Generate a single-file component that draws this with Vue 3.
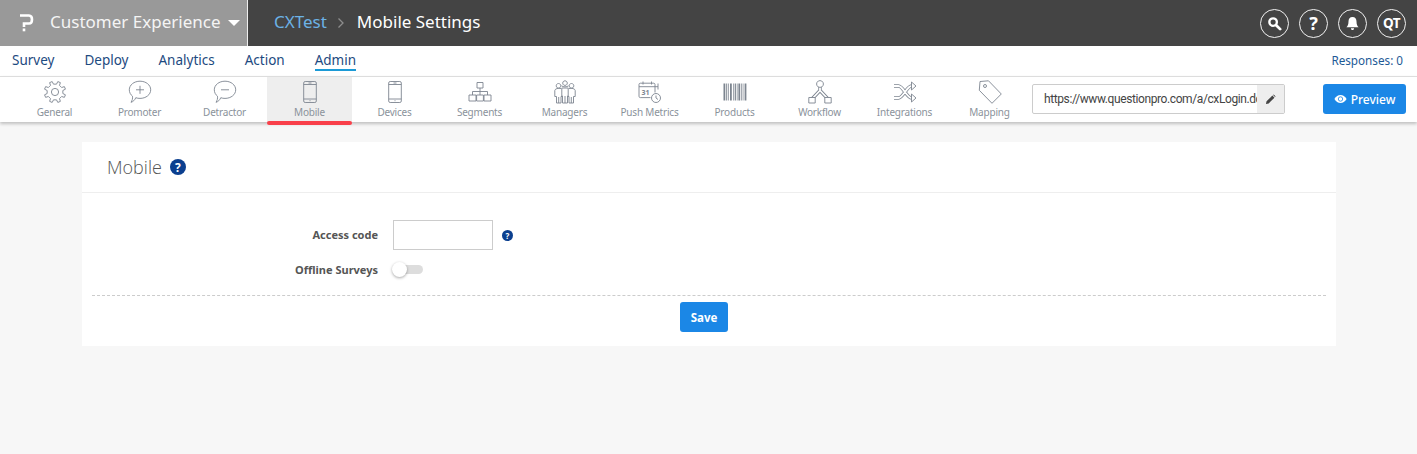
<script setup>
const gear = (() => {
  const cx = 12, cy = 12, pts = [], n = 8
  for (let i = 0; i < n; i++) {
    const a = (i / n) * Math.PI * 2 + Math.PI / 8
    const list = [[-0.2, 8], [-0.13, 10.8], [0.13, 10.8], [0.2, 8]]
    for (const [o, r] of list) {
      pts.push(`${(cx + r * Math.cos(a + o)).toFixed(2)} ${(cy + r * Math.sin(a + o)).toFixed(2)}`)
    }
  }
  return 'M' + pts.join('L') + 'Z M15.600 12a3.600 3.600 0 1 1-7.200 0a3.600 3.600 0 1 1 7.200 0Z'
})()

const bubble = 'M4.500 16.200C2.500 14.700 1.300 12.300 1.300 9.800C1.300 5 6 1.200 12 1.200S22.700 5 22.700 9.800S18 18.400 12 18.400C10.500 18.400 9.100 18.200 7.800 17.700C6.800 20 5 21.800 3 22.300C4.200 20.500 4.800 18.500 4.500 16.200Z'
const phone = 'M7.200 1.500H16.800A1.500 1.500 0 0 1 18.300 3V21A1.500 1.500 0 0 1 16.800 22.500H7.200A1.500 1.500 0 0 1 5.700 21V3A1.500 1.500 0 0 1 7.200 1.500ZM5.700 4.500H18.300M5.700 19H18.300M10.500 3H13.500M12 20.300V21.200'

const items = [
  { label: 'General', d: gear },
  { label: 'Promoter', d: bubble + 'M12 5.800V13.800M8 9.800H16' },
  { label: 'Detractor', d: bubble + 'M8 9.800H16' },
  { label: 'Mobile', d: phone, active: true },
  { label: 'Devices', d: phone },
  { label: 'Segments', d: 'M9 2.500H15V8H9ZM12 8V11.500M4.500 11.500H19.500M4.500 11.500V15M12 11.500V15M19.500 11.500V15M1 15H8V21H1ZM8.600 15H15.400V21H8.600ZM16 15H23V21H16Z' },
  { label: 'Managers', d: 'M12 .8a2.300 2.300 0 1 0 .01 0ZM5.500 3.500a2.300 2.300 0 1 0 .01 0ZM18.500 3.500a2.300 2.300 0 1 0 .01 0ZM8.500 5.800C10 7.200 14 7.200 15.500 5.800M8 8.500C5 8 2.200 8.500 1.800 10.500V16.500H3.500V23H8V16.500H9M16 8.500C19 8 21.800 8.500 22.200 10.500V16.500H20.500V23H16V16.500H15M8.800 8H15.200V16H14.500V23H9.500V16H8.800ZM12 16V23M5.700 17V23M18.300 17V23' },
  { label: 'Push Metrics', d: 'M17 12.500V4.500C17 3.700 16.500 3.200 15.700 3.200H2.300C1.500 3.200 1 3.700 1 4.500V16.300C1 17.100 1.500 17.600 2.300 17.600H12.500M1 6.700H20M5 1.500V4.500M13.500 1.500V4.500M22.500 18a4.500 4.500 0 1 1-9 0a4.500 4.500 0 1 1 9 0ZM18 15.500V18L20 19.500M20 3.500V9.500', extra: '31' },
  { label: 'Products', bars: true },
  { label: 'Workflow', band: 'M12 4V10.500L4 19M12 10.500L20 19', d: 'M12 .6a3.400 3.400 0 1 0 .01 0ZM.8 17.500H7.200V23H.8ZM16.800 17.500H23.200V23H16.800Z' },
  { label: 'Integrations', band: 'M1 6H5.500C10 6 14 18 18.500 18H20M1 18H5.500C10 18 14 6 18.500 6H20', d: 'M18.500 2L23 6L18.500 10ZM18.500 14L23 18L18.500 22Z' },
  { label: 'Mapping', d: 'M2 1.500L10.500 .8L23.300 14L14 23.300L1.300 10.300ZM8.500 6a1.500 1.500 0 1 1-3 0a1.500 1.500 0 1 1 3 0Z' }
]
const bars = [[.5, 1.8], [3.2, 1], [5.2, .7], [7, 1.8], [10, .7], [11.700, 1.200], [13.800, .7], [15.400, 1.800], [18, .7], [19.700, .7], [21.600, 1.800]]
</script>

<template>
  <div class="page">
    <header class="top">
      <div class="brand">
        <svg class="logo" viewBox="0 0 16 20" width="16" height="20"><path d="M2 2.500H11C13 2.500 14 4 14 6.500S13 10.500 11 10.500H6V14" fill="none" stroke="#fff" stroke-width="2.600"/><rect x="4.700" y="15.500" width="2.600" height="2.800" fill="#fff"/></svg>
        <span class="brand-name">Customer Experience</span>
        <span class="caret"></span>
      </div>
      <div class="crumbs">
        <span class="crumb-link">CXTest</span>
        <svg class="chev" viewBox="0 0 8 12" width="8" height="12"><path d="M1.500 1.500L6 6L1.500 10.500" fill="none" stroke="#8d8d8d" stroke-width="1.300"/></svg>
        <span class="crumb-page">Mobile Settings</span>
      </div>
      <div class="tools">
        <span class="tool"><svg viewBox="0 0 16 16" width="15" height="15"><circle cx="6.500" cy="6.500" r="4" fill="none" stroke="#fff" stroke-width="2.500"/><path d="M9.800 9.800L14 14" stroke="#fff" stroke-width="3" stroke-linecap="round"/></svg></span>
        <span class="tool tool-q">?</span>
        <span class="tool"><svg viewBox="0 0 16 16" width="15" height="15"><path d="M8 1C10.800 1 12.300 3 12.300 6C12.300 9 13 10.500 14.500 12H1.500C3 10.500 3.700 9 3.700 6C3.700 3 5.200 1 8 1ZM6.300 13H9.700C9.700 14 9 15 8 15S6.300 14 6.300 13Z" fill="#fff"/></svg></span>
        <span class="tool tool-t">QT</span>
      </div>
    </header>

    <nav class="menu">
      <a>Survey</a>
      <a>Deploy</a>
      <a>Analytics</a>
      <a>Action</a>
      <a class="current">Admin</a>
      <span class="responses">Responses: 0</span>
    </nav>

    <div class="iconbar">
      <div class="items">
        <div v-for="it in items" :key="it.label" class="item" :class="{ on: it.active }">
          <svg class="ico" viewBox="0 0 24 24" width="24" height="24">
            <template v-if="it.bars"><rect v-for="b in bars" :key="b[0]" :x="b[0]" y="3.500" :width="b[1]" height="17" fill="#7d8590"/></template>
            <template v-if="it.band">
              <path :d="it.band" fill="none" stroke="#7d8590" stroke-width="3.400" />
              <path :d="it.band" fill="none" stroke="#fff" stroke-width="1.800" />
            </template>
            <path v-if="it.d" :d="it.d" :fill="it.band ? '#fff' : 'none'" stroke="#7d8590" stroke-width="0.900"/>
            <text v-if="it.extra" x="3.500" y="15" class="cal">{{ it.extra }}</text>
          </svg>
          <span class="lbl">{{ it.label }}</span>
        </div>
      </div>
      <div class="url">
        <span class="url-text">https://www.questionpro.com/a/cxLogin.do</span>
        <span class="url-btn"><svg viewBox="0 0 12 12" width="11" height="11"><path d="M1 11L1.700 8L8 1.700L10.300 4L4 10.300ZM8.800 1L9.500 .5L11.500 2.500L11 3.200Z" fill="#444"/></svg></span>
      </div>
      <button class="preview">
        <svg viewBox="0 0 16 12" width="13" height="10"><path d="M.5 6C2.500 2.500 5 1 8 1S13.500 2.500 15.500 6C13.500 9.500 11 11 8 11S2.500 9.500 .5 6Z" fill="#fff"/><circle cx="8" cy="6" r="2.700" fill="none" stroke="#1b87e6" stroke-width="1"/></svg>
        Preview
      </button>
    </div>

    <main class="card">
      <div class="card-head">
        <h1>Mobile</h1>
        <span class="help big">?</span>
      </div>
      <div class="form">
        <div class="row row-code">
          <label>Access code</label>
          <input class="code" type="text" />
          <span class="help small">?</span>
        </div>
        <div class="row row-off">
          <label>Offline Surveys</label>
          <span class="toggle"><span class="knob"></span></span>
        </div>
      </div>
      <div class="actions">
        <button class="save">Save</button>
      </div>
    </main>
  </div>
</template>

<style>
html, body { margin: 0; background: #f7f7f7; }
</style>

<style scoped>
.page { font-family: "Noto Sans", "Open Sans", sans-serif; min-height: 454px; background: #f7f7f7; overflow: hidden; }
.top { height: 46px; background: #444; display: flex; align-items: center; color: #fff; }
.brand { width: 247px; height: 46px; background: #999; border-right: 1px solid #eee; display: flex; align-items: center; box-sizing: content-box; }
.logo { margin-left: 18px; }
.brand-name { margin: 0 0 3px 16px; font-size: 17px; color: #f4f4f4; white-space: nowrap; }
.caret { margin-left: 8px; border: 6px solid transparent; border-top-color: #fff; border-bottom-width: 0; }
.crumbs { margin: 0 0 3px 26px; display: flex; align-items: center; font-size: 17px; }
.crumb-link { color: #6cb2e6; }
.chev { margin: 3px 12px 0 10px; }
.crumb-page { color: #fff; }
.tools { margin-left: auto; margin-right: 11px; display: flex; gap: 10px; }
.tool { width: 27px; height: 27px; border: 1px solid #f2f2f2; border-radius: 50%; display: flex; align-items: center; justify-content: center; font-weight: 700; }
.tool-q { font-size: 18px; }
.tool-t { font-size: 13.500px; letter-spacing: -.5px; }
.menu { height: 30px; background: #fff; display: flex; align-items: center; padding: 0 14px 2px 12px; gap: 30px; font-size: 13.500px; color: #1d4a80; box-sizing: border-box; }
.menu a { line-height: 20px; white-space: nowrap; }
.menu .current { border-bottom: 2px solid #1b9ad6; line-height: 18px; margin-top: 2px; }
.responses { margin-left: auto; font-size: 11.700px; color: #1d5a96; }
.iconbar { height: 46px; background: #fff; border-top: 1px solid #ddd; box-shadow: 0 2px 3px rgba(0,0,0,.22); display: flex; align-items: flex-start; padding-left: 12px; box-sizing: border-box; position: relative; }
.items { display: flex; width: 1020px; }
.item { width: 85px; height: 45px; display: flex; flex-direction: column; align-items: center; box-sizing: border-box; padding-top: 3px; position: relative; }
.item.on { background: #eee; }
.item.on::after { content: ""; position: absolute; left: 0; right: 0; bottom: -3px; height: 4px; background: #f9404a; border-radius: 2px; }
.ico { display: block; }
.cal { font: 700 7px "Noto Sans", sans-serif; fill: #7d8590; }
.lbl { font-size: 10px; letter-spacing: -.2px; line-height: 14px; margin-top: 1px; color: #8a929b; white-space: nowrap; }
.url { width: 253px; height: 30px; margin-top: 7px; border: 1px solid #ccc; border-radius: 2px; display: flex; box-sizing: border-box; overflow: hidden; font-family: Roboto, sans-serif; font-size: 12px; letter-spacing: -.4px; color: #444; }
.url-text { width: 224px; padding-left: 11px; line-height: 28px; white-space: nowrap; overflow: hidden; box-sizing: border-box; }
.url-btn { flex: 1; background: #eee; display: flex; align-items: center; justify-content: center; }
.preview { width: 83px; height: 30px; margin: 7px 0 0 38px; padding: 0; background: #1b87e6; color: #fff; border: 0; border-radius: 3px; font: 500 12px "Noto Sans", sans-serif; display: flex; align-items: center; justify-content: center; gap: 4px; }
.card { width: 1254px; height: 204px; margin: 20px 0 0 82px; background: #fff; box-sizing: border-box; display: flex; flex-direction: column; }
.card-head { height: 51px; border-bottom: 1px solid #eee; box-sizing: border-box; display: flex; align-items: center; padding-left: 25px; gap: 8px; }
h1 { margin: 0 0 1px; font-size: 18px; font-weight: 300; color: #555; font-family: "Open Sans", sans-serif; }
.help { border-radius: 50%; background: #0b3f8f; color: #fff; display: flex; align-items: center; justify-content: center; font-weight: 700; font-family: "Noto Sans", sans-serif; }
.help.big { width: 16px; height: 16px; font-size: 12px; }
.help.small { width: 11px; height: 11px; font-size: 8px; margin-left: 9px; }
.form { height: 102px; margin: 0 10px; border-bottom: 1px dashed #ccc; box-sizing: content-box; padding-top: 0; }
.row { display: flex; align-items: center; }
.row label { width: 286px; text-align: right; font-size: 11px; font-weight: 700; color: #555; margin: 0 15px 2px 0; white-space: nowrap; }
.row-code { margin-top: 27px; }
.code { width: 100px; height: 30px; border: 1px solid #ccc; box-sizing: border-box; background: #fff; padding: 0; margin: 0; }
.row-off { margin-top: 12px; }
.row-off label { margin-bottom: 0; }
.toggle { width: 30px; height: 9px; background: #ddd; border-radius: 5px; position: relative; display: block; }
.knob { position: absolute; left: -1px; top: -3px; width: 15px; height: 15px; border-radius: 50%; background: #fff; box-shadow: 0 1px 3px rgba(0,0,0,.35); }
.actions { display: flex; justify-content: center; padding: 6px 10px 0 0; }
.save { width: 48px; height: 30px; background: #1b87e6; color: #fff; border: 0; border-radius: 3px; font: 700 11.500px "Noto Sans", sans-serif; padding: 0; }
</style>
